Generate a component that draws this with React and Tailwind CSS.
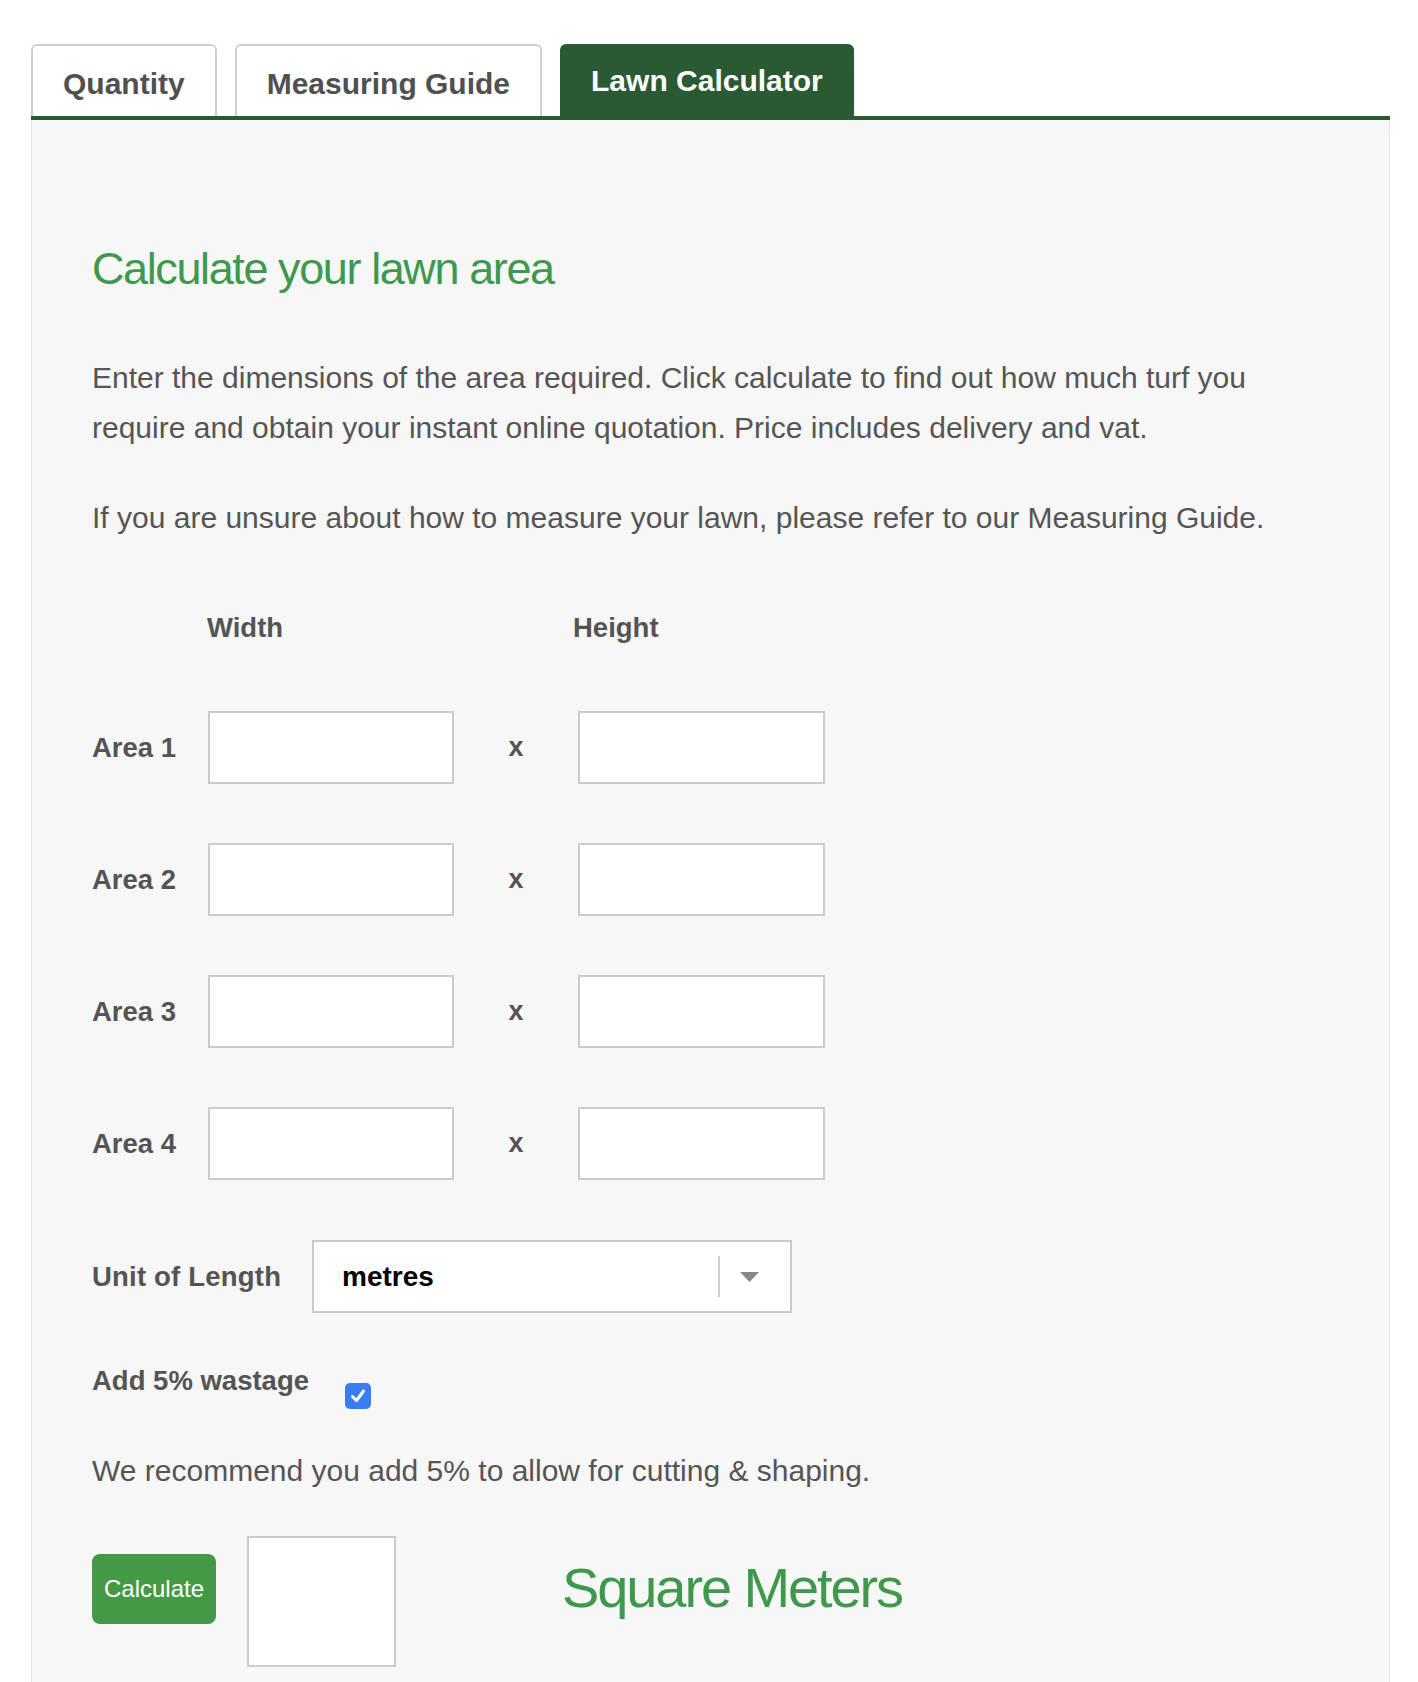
import { useState } from 'react'

// ── Constants ─────────────────────────────────────
const TABS = [
  { id: 'quantity', label: 'Quantity' },
  { id: 'guide', label: 'Measuring Guide' },
  { id: 'calculator', label: 'Lawn Calculator' },
]

const AREAS = [1, 2, 3, 4]

const FONT = "font-['Liberation_Sans',Arial,Helvetica,sans-serif]"

// ── Tab Bar ───────────────────────────────────────
function TabBar({ active, onChange }) {
  return (
    <div className="flex items-end gap-[18px] border-b-4 border-[#2a5a33]">
      {TABS.map(tab =>
        tab.id === active ? (
          <button
            key={tab.id}
            onClick={() => onChange(tab.id)}
            className="h-[72px] px-[31px] pt-[20px] self-start rounded-t-[6px] bg-[#2a5a33] text-white text-[30px] font-bold leading-[34px] text-left flex items-start"
          >
            {tab.label}
          </button>
        ) : (
          <button
            key={tab.id}
            onClick={() => onChange(tab.id)}
            className="h-[72px] px-[30px] pt-[21px] rounded-t-[6px] border-2 border-b-0 border-[#cfcfcf] bg-white text-[#505050] text-[30px] font-bold leading-[34px] flex items-start"
          >
            {tab.label}
          </button>
        )
      )}
    </div>
  )
}

// ── Area Row ──────────────────────────────────────
function AreaRow({ n, first }) {
  return (
    <div className={`flex items-center ${first ? 'mt-[66px]' : 'mt-[59px]'}`}>
      <span className="w-[116px] text-[27.5px] font-bold leading-[34px] text-[#545454]">
        Area {n}
      </span>
      <input
        type="text"
        className="w-[246px] h-[73px] border-2 border-[#cbcbcb] bg-white outline-none px-3 text-[24px]"
      />
      <span className="w-[124px] text-center text-[27px] font-bold text-[#545454]">x</span>
      <input
        type="text"
        className="w-[247px] h-[73px] border-2 border-[#cbcbcb] bg-white outline-none px-3 text-[24px]"
      />
    </div>
  )
}

// ── Unit Select ───────────────────────────────────
function UnitSelect() {
  return (
    <div className="w-[480px] h-[73px] border-2 border-[#cbcbcb] bg-white flex items-center">
      <span className="flex-1 pl-[28px] text-[28px] font-bold text-black">metres</span>
      <span className="w-[2px] h-[41px] bg-[#cfcfcf]" />
      <svg width="19" height="10" viewBox="0 0 19 10" className="ml-[20px] mr-[31px]">
        <polygon points="0,0 19,0 9.5,10" fill="#888888" />
      </svg>
    </div>
  )
}

// ── Checkbox ──────────────────────────────────────
function Checkbox({ checked, onToggle }) {
  return (
    <button
      role="checkbox"
      aria-checked={checked}
      onClick={onToggle}
      className={`w-[26px] h-[26px] rounded-[5px] flex items-center justify-center ${checked ? 'bg-[#3a7cf2]' : 'bg-white border-2 border-[#999]'}`}
    >
      {checked && (
        <svg width="18" height="18" viewBox="0 0 18 18">
          <path d="M3.5 9.5 L7.5 13.5 L14.5 4" fill="none" stroke="white" strokeWidth="3" strokeLinecap="round" strokeLinejoin="round" />
        </svg>
      )}
    </button>
  )
}

// ── Main Component ────────────────────────────────
export default function App() {
  const [tab, setTab] = useState('calculator')
  const [wastage, setWastage] = useState(true)

  return (
    <div className={`min-h-screen bg-white pt-[44px] pl-[31px] pr-[28px] ${FONT}`}>
      <TabBar active={tab} onChange={setTab} />

      <div className="bg-[#f7f7f7] border-x border-[#e6e6e6] pl-[60px] pt-[122px] pb-[60px]">

        {/* Intro */}
        <h2 className="text-[45px] leading-[54px] tracking-[-1.4px] text-[#3f984c]">
          Calculate your lawn area
        </h2>
        <p className="mt-[57px] max-w-[1180px] text-[30px] leading-[50px] text-[#555555]">
          Enter the dimensions of the area required. Click calculate to find out how much turf you
          require and obtain your instant online quotation. Price includes delivery and vat.
        </p>
        <p className="mt-[40px] text-[30px] leading-[50px] text-[#555555]">
          If you are unsure about how to measure your lawn, please refer to our Measuring Guide.
        </p>

        {/* Dimensions */}
        <div className="mt-[68px] flex text-[27.5px] font-bold leading-[34px] text-[#545454]">
          <span className="w-[115px]" />
          <span className="w-[366px]">Width</span>
          <span>Height</span>
        </div>
        {AREAS.map((n, i) => (
          <AreaRow key={n} n={n} first={i === 0} />
        ))}

        {/* Unit */}
        <div className="mt-[60px] flex items-center">
          <span className="w-[220px] text-[27.5px] font-bold leading-[34px] tracking-[0.2px] text-[#545454]">
            Unit of Length
          </span>
          <UnitSelect />
        </div>

        {/* Wastage */}
        <div className="mt-[51px] flex items-start">
          <span className="text-[27.5px] font-bold leading-[34px] text-[#545454]">
            Add 5% wastage
          </span>
          <div className="ml-[36px] mt-[19px]">
            <Checkbox checked={wastage} onToggle={() => setWastage(w => !w)} />
          </div>
        </div>
        <p className="mt-[37px] text-[30px] leading-[50px] text-[#555555]">
          We recommend you add 5% to allow for cutting &amp; shaping.
        </p>

        {/* Result */}
        <div className="mt-[40px] flex items-start">
          <button className="mt-[18px] w-[124px] h-[70px] rounded-[8px] bg-[#449a44] text-white text-[24px]">
            Calculate
          </button>
          <div className="ml-[31px] w-[149px] h-[131px] border-2 border-[#cbcbcb] bg-white" />
          <span className="ml-[166px] mt-[20px] text-[56px] leading-[64px] tracking-[-2.1px] text-[#3f984c]">
            Square Meters
          </span>
        </div>

      </div>
    </div>
  )
}
